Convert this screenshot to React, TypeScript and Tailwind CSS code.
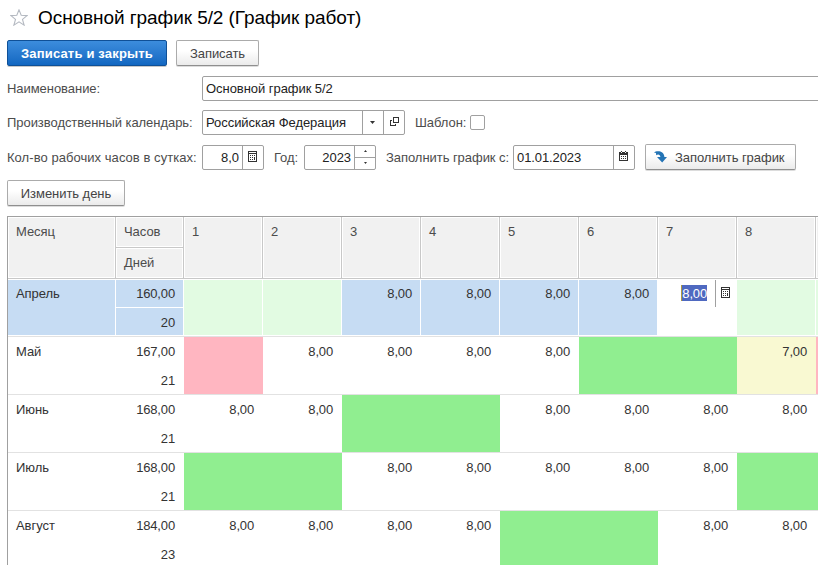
import React from "react";

const INK = "#333333";

function Txt({ w, children, className = "" }: { w: string; children: React.ReactNode; className?: string }) {
  return <span className={`block shrink-0 whitespace-nowrap ${w} ${className}`}>{children}</span>;
}

function CalcIcon() {
  return (
    <svg width="9" height="11" viewBox="0 0 9 11" shapeRendering="crispEdges" className="block shrink-0" fill={INK}>
      <path fillRule="evenodd" d="M0 0h9v11H0zM1 3v7h7V3zM1 1v1h7V1z" />
      <path d="M2 4h1v1H2zM4 4h1v1H4zM6 4h1v1H6zM2 6h1v1H2zM4 6h1v1H4zM6 6h1v3H6zM2 8h1v1H2zM4 8h1v1H4z" />
    </svg>
  );
}

function CalendarIcon() {
  return (
    <svg width="9" height="10" viewBox="0 0 9 10" shapeRendering="crispEdges" className="block shrink-0" fill={INK}>
      <path fillRule="evenodd" d="M0 1h2V0h1v1h3V0h1v1h2v9H0zM1 4v5h7V4zM2 1v1h1V1zM6 1v1h1V1z" />
      <path d="M2 5h1v1H2zM4 5h1v1H4zM6 5h1v1H6zM2 7h1v1H2zM4 7h1v1H4zM6 7h1v1H6z" />
    </svg>
  );
}

function OpenIcon() {
  return (
    <svg width="9" height="9" viewBox="0 0 9 9" shapeRendering="crispEdges" className="block" fill="none" stroke={INK}>
      <path d="M3.500 .5h5v5h-5zM2 3.500H.5v5h5V7" />
    </svg>
  );
}

function Btn({ className, children }: { className: string; children: React.ReactNode }) {
  return (
    <button
      className={`flex shrink-0 items-center whitespace-nowrap rounded-[2px] border border-[#ababab] border-b-[#8f8f8f] bg-linear-to-b from-white from-40% to-[#ebebeb] text-[#444444] shadow-[0_1px_0_#dcdcdc] ${className}`}
    >
      {children}
    </button>
  );
}

function Field({ className, children }: { className: string; children: React.ReactNode }) {
  return <div className={`flex h-[25px] shrink-0 rounded-[2px] border border-[#a0a0a0] bg-white text-[#222222] ${className}`}>{children}</div>;
}

const DAYS = [1, 2, 3, 4, 5, 6, 7, 8];

// n: working day, w: weekend, h: public holiday, s: shortened day, e: empty
const MONTHS = [
  { name: "Май", hours: "167,00", days: "21", cells: "hnnnnwwsh" },
  { name: "Июнь", hours: "168,00", days: "21", cells: "nnwwnnnne" },
  { name: "Июль", hours: "168,00", days: "21", cells: "wwnnnnnww" },
  { name: "Август", hours: "184,00", days: "23", cells: "nnnnwwnne" },
];

const CELL_BG: Record<string, string> = { n: "", e: "", w: "bg-[#90ee90]", h: "bg-[#ffb6c1]", s: "bg-[#f9f9d2]" };
const CELL_TEXT: Record<string, string> = { n: "8,00", e: "", w: "", h: "", s: "7,00" };

function HeadCell({ className, children }: { className: string; children?: React.ReactNode }) {
  return (
    <div className={`shrink-0 border-r border-r-[#c8c8c8] p-px ${className}`}>
      <div className="h-full bg-[#f1f1f1] pl-[7px] pt-[5px] leading-[18px] text-[#4c4c4c]">{children}</div>
    </div>
  );
}

function Header() {
  return (
    <div className="flex h-[62px] border-b border-b-[#c8c8c8]">
      <HeadCell className="w-[108px]">Месяц</HeadCell>
      <div className="w-[68px] shrink-0">
        <HeadCell className="h-[31px] border-b border-b-[#c8c8c8]">Часов</HeadCell>
        <HeadCell className="h-[30px]">Дней</HeadCell>
      </div>
      {DAYS.map((d) => (
        <HeadCell key={d} className="w-[79px]">{d}</HeadCell>
      ))}
      <HeadCell className="w-[79px]" />
    </div>
  );
}

function AprilRow() {
  return (
    <div className="flex h-[58px] border-b border-b-[#e2e2e2] py-px leading-[28px]">
      <div className="mr-px w-[107px] shrink-0 bg-[#c6dcf3] pl-2">Апрель</div>
      <div className="mr-px flex w-[67px] shrink-0 flex-col gap-px text-right tracking-[-0.15px]">
        <div className="h-[27px] bg-[#c6dcf3] pr-2">160,00</div>
        <div className="h-[27px] bg-[#c6dcf3] pr-2 leading-[30px]">20</div>
      </div>
      {DAYS.map((d) =>
        d === 7 ? (
          <div key={d} className="mr-px flex w-[78px] shrink-0">
            <div className="flex h-[27px] w-[58px] items-start justify-end border-r border-r-[#a0a0a0] pr-[8px] pt-[5px]">
              <span className="h-[16px] border-l border-l-[#b09a40] bg-[#4f69c0] leading-[18px] tracking-[-0.15px] text-white">8,00</span>
            </div>
            <div className="pl-[5px] pt-[7px]"><CalcIcon /></div>
          </div>
        ) : (
          <div key={d} className={`mr-px w-[78px] shrink-0 pr-2 text-right tracking-[-0.15px] ${d < 3 || d > 7 ? "bg-[#e2fbe2]" : "bg-[#c6dcf3]"}`}>
            {d < 3 || d > 7 ? "" : "8,00"}
          </div>
        ),
      )}
      <div className="w-[78px] shrink-0 bg-[#e2fbe2]" />
    </div>
  );
}

export default function App() {
  return (
    <div className="h-[565px] w-[818px] overflow-hidden bg-white font-['Liberation_Sans',Arial,sans-serif] text-[13px] leading-[18px] tracking-[-0.05px] text-[#4c4c4c]">
      <div className="flex h-10 items-center pb-[5px] pl-[10px]">
        <svg width="18" height="17" viewBox="0 0 18 17" fill="none" stroke="#b4b9c1" strokeWidth="1.1" className="mr-[10px] block">
          <path d="M9 .9l2.200 5.400 5.900.3-4.600 3.800 1.600 5.700L9 12.900l-5.100 3.200 1.600-5.700L.9 6.600l5.900-.3z" />
        </svg>
        <h1 className="whitespace-nowrap text-[19px] tracking-[-0.07px] text-black">Основной график 5/2 (График работ)</h1>
      </div>

      <div className="flex gap-[9px] pl-[7px]">
        <button className="flex h-[26px] w-[160px] items-center justify-center whitespace-nowrap rounded-[2px] border border-[#0f5097] bg-linear-to-b from-[#3c8ddd] to-[#1267c1] pt-px font-bold tracking-[0.18px] text-white shadow-[0_1px_0_#c8c8c8]">
          Записать и закрыть
        </button>
        <Btn className="h-[26px] w-[83px] justify-center pt-px">Записать</Btn>
      </div>

      <div className="mt-[10px] flex items-center pl-[7px]">
        <Txt w="w-[195px]">Наименование:</Txt>
        <Field className="w-[640px] items-center pl-[3px]">Основной график 5/2</Field>
      </div>

      <div className="mt-[9px] flex items-center pl-[7px]">
        <Txt w="w-[195px]">Производственный календарь:</Txt>
        <Field className="w-[203px] items-stretch">
          <div className="flex w-[159px] items-center whitespace-nowrap pl-[3px]">Российская Федерация</div>
          <div className="flex w-[21px] items-center justify-center border-l border-[#a0a0a0] pr-px">
            <svg width="5" height="3" viewBox="0 0 5 3" fill={INK}><path d="M0 0h5L2.500 3z" /></svg>
          </div>
          <div className="flex w-[21px] items-center justify-center border-l border-[#a0a0a0] pb-[2px] pl-px"><OpenIcon /></div>
        </Field>
        <Txt w="w-[55px]" className="ml-[10px]">Шаблон:</Txt>
        <div className="size-[15px] rounded-[2px] border border-[#a0a0a0]" />
      </div>

      <div className="mt-[9px] flex h-[26px] items-center pl-[7px]">
        <Txt w="w-[195px]" className="pt-px tracking-[0.05px]">Кол-во рабочих часов в сутках:</Txt>
        <Field className="w-[62px]">
          <div className="flex w-[39px] items-center justify-end pr-[3px] pt-px">8,0</div>
          <div className="flex w-[21px] items-center justify-center border-l border-[#a0a0a0] pb-[2px] pr-px"><CalcIcon /></div>
        </Field>
        <Txt w="w-[30px]" className="ml-[10px] pt-px">Год:</Txt>
        <Field className="w-[72px]">
          <div className="flex w-[49px] items-center justify-end pr-[3px] pt-px">2023</div>
          <div className="flex w-[21px] flex-col border-l border-[#a0a0a0]">
            <div className="flex h-[12px] items-center justify-center border-b border-[#a0a0a0]">
              <svg width="3" height="2" viewBox="0 0 3 2" fill={INK}><path d="M0 2h3L1.500 0z" /></svg>
            </div>
            <div className="flex h-[11px] items-center justify-center">
              <svg width="3" height="2" viewBox="0 0 3 2" fill={INK}><path d="M0 0h3L1.500 2z" /></svg>
            </div>
          </div>
        </Field>
        <Txt w="w-[127px]" className="ml-[10px] pt-px">Заполнить график с:</Txt>
        <Field className="w-[122px]">
          <div className="flex w-[99px] items-center pl-[3px] pt-px tracking-[-0.1px]">01.01.2023</div>
          <div className="flex w-[21px] items-center justify-center border-l border-[#a0a0a0] pb-[3px] pr-px"><CalendarIcon /></div>
        </Field>
        <Btn className="ml-[10px] h-[26px] w-[151px] gap-[8px] pl-[8px]">
          <svg width="13" height="12" viewBox="0 0 13 12" className="block" fill="#2474b5">
            <path d="M0 1.500C2-.2 9.800-1.200 10.400 6H13L8.200 11.500 3 6h3.400C6.200 3.500 4 2.600 2.200 4.300L2 2z" />
          </svg>
          <span className="pt-px">Заполнить график</span>
        </Btn>
      </div>

      <div className="mt-[10px] pl-[7px]">
        <Btn className="h-[26px] w-[118px] justify-center pt-px">Изменить день</Btn>
      </div>

      <div className="ml-[7px] mt-[10px] h-[349px] overflow-hidden border-l border-t border-[#a0a0a0]">
        <div className="w-[900px] text-[#333333]">
          <Header />
          <AprilRow />
          {MONTHS.map((m) => (
            <div key={m.name} className="flex h-[58px] border-b border-b-[#e2e2e2] leading-[29px]">
              <div className="w-[108px] shrink-0 pl-2">{m.name}</div>
              <div className="w-[68px] shrink-0 pr-[9px] text-right tracking-[-0.15px]">
                <div>{m.hours}</div>
                <div>{m.days}</div>
              </div>
              {m.cells.split("").map((c, i) => (
                <div key={i} className={`w-[79px] shrink-0 pr-[9px] text-right tracking-[-0.15px] ${CELL_BG[c]}`}>{CELL_TEXT[c]}</div>
              ))}
            </div>
          ))}
        </div>
      </div>
    </div>
  );
}
